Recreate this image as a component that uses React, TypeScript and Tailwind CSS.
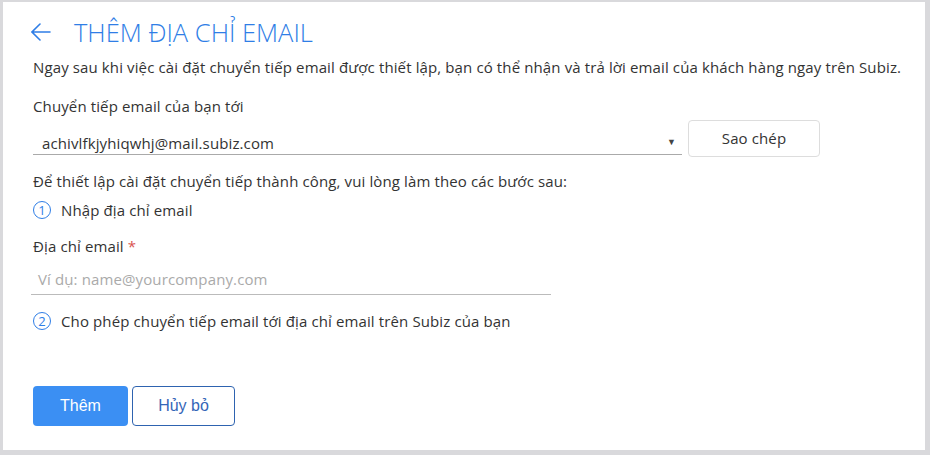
const font = { fontFamily: "'Open Sans', 'Noto Sans', sans-serif" };

const StepBadge = ({ n }: { n: number }) => (
  <span className="flex h-[18px] w-[18px] items-center justify-center rounded-full border border-[#2f7ee6] text-[13px] leading-none text-[#2f7ee6]">
    {n}
  </span>
);

export default function App() {
  return (
    <div
      className="h-[455px] w-[930px] overflow-hidden bg-white text-[#333] tracking-[0.12px] border-l-[3px] border-t-2 border-r-[5px] border-b-[5px] border-[#d9d9dc]"
      style={font}
    >
      <div className="pl-[30px] pr-4 pt-[14px]">
        <div className="flex items-center">
          <svg width="20" height="20" viewBox="0 0 20 20" className="ml-[-2px] text-[#2f7ee6]" fill="none" stroke="currentColor" strokeWidth="1.6" strokeLinecap="round">
            <path d="M1 10 H19 M9 2 L1 10 L9 18" />
          </svg>
          <h1 className="ml-[23px] text-[25.5px] font-light leading-[32px] tracking-normal text-[#2f7ee6]">
            THÊM ĐỊA CHỈ EMAIL
          </h1>
        </div>

        <p className="mt-[9px] text-[15px] leading-[20px]">
          Ngay sau khi việc cài đặt chuyển tiếp email được thiết lập, bạn có thể nhận và trả lời email của khách hàng ngay trên Subiz.
        </p>

        <p className="mt-[19px] text-[15px] leading-[20px]">Chuyển tiếp email của bạn tới</p>

        <div className="mt-[4px] flex items-start gap-[6px]">
          <div className="flex h-[35px] w-[649px] items-end justify-between border-b border-[#aaa] pb-[1px] pl-[9px] pr-[6px]">
            <span className="text-[15px] leading-[20px]">achivlfkjyhiqwhj@mail.subiz.com</span>
            <span className="mb-[5px] text-[9px] text-[#444]">▼</span>
          </div>
          <button className="h-[37px] w-[132px] rounded border border-[#ddd] text-[15px] text-[#333]">
            Sao chép
          </button>
        </div>

        <p className="mt-[14px] text-[15px] leading-[20px]">
          Để thiết lập cài đặt chuyển tiếp thành công, vui lòng làm theo các bước sau:
        </p>

        <div className="mt-[9px] flex items-center gap-[10px] text-[15px] leading-[20px]">
          <StepBadge n={1} />
          <span>Nhập địa chỉ email</span>
        </div>

        <p className="mt-[16px] text-[15px] leading-[20px]">
          Địa chỉ email <span className="text-[#d9534f]">*</span>
        </p>

        <div className="mt-[10px] ml-[-2px] flex h-[29px] w-[520px] items-start border-b border-[#bbb] pl-[7px] pt-[3px]">
          <span className="text-[15px] leading-[20px] text-[#aaa]">Ví dụ: name@yourcompany.com</span>
        </div>

        <div className="mt-[16px] flex items-center gap-[10px] text-[15px] leading-[20px]">
          <StepBadge n={2} />
          <span>Cho phép chuyển tiếp email tới địa chỉ email trên Subiz của bạn</span>
        </div>

        <div className="mt-[55px] flex gap-[4px] tracking-normal" style={{ fontFamily: "'Liberation Sans', Arial, sans-serif" }}>
          <button className="h-[40px] w-[95px] rounded bg-[#3b8ff3] text-[16px] text-white">Thêm</button>
          <button className="h-[40px] w-[103px] rounded border border-[#2e63b0] text-[16px] text-[#3566b8]">
            Hủy bỏ
          </button>
        </div>
      </div>
    </div>
  );
}
